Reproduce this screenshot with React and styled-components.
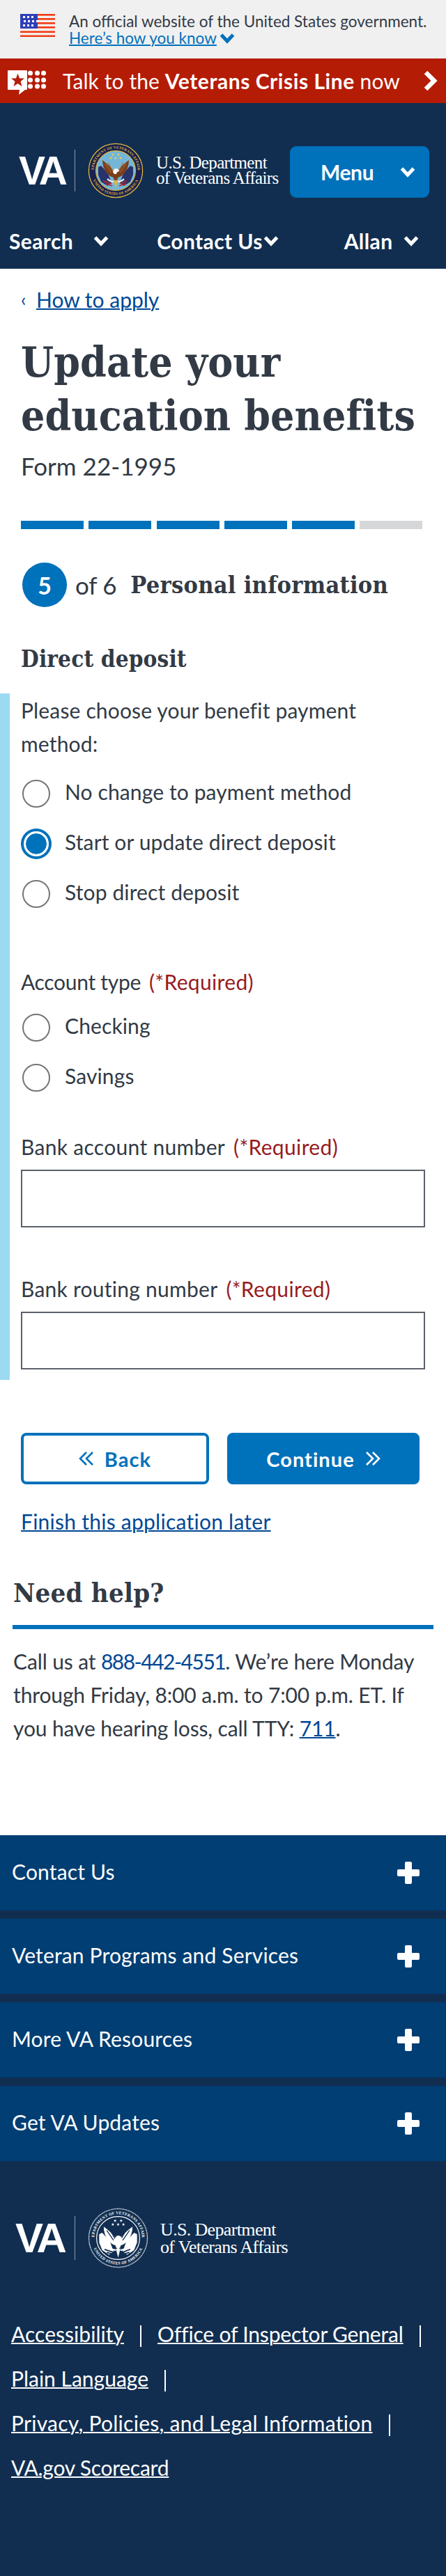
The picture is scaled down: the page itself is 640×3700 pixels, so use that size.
import React from "react";
import styled, { createGlobalStyle } from "styled-components";

const SANS = `Lato, "Noto Sans", sans-serif`;
const SLAB = `"DejaVu Serif Condensed", "DejaVu Serif", serif`;
const SEAL_SERIF = `"Liberation Serif", serif`;

const GlobalStyle = createGlobalStyle`
  html, body {
    margin: 0;
    padding: 0;
    background: #fff;
  }
  body {
    font-family: ${SANS};
    color: #323a45;
  }
  * {
    box-sizing: border-box;
  }
`;

const Page = styled.div`
  width: 640px;
  min-height: 3700px;
  display: flex;
  flex-direction: column;
`;

const Banner = styled.div`
  height: 84px;
  background: #f0f0f0;
  display: flex;
  padding: 19px 0 0 29px;
`;

const FlagSvg = styled.svg`
  flex: none;
  margin-top: 1px;
`;

const BannerText = styled.div`
  margin-left: 20px;
  font-size: 22.5px;
  line-height: 24px;
`;

const BannerLinkRow = styled.div`
  display: flex;
  align-items: center;
  gap: 4px;
`;

const BannerLink = styled.a`
  color: #0071bb;
  text-decoration: underline;
  text-decoration-thickness: 2px;
`;

const CrisisBar = styled.div`
  height: 64px;
  background: #b51c06;
  color: #fff;
  display: flex;
  align-items: center;
  padding: 0 12px 0 10px;
  font-size: 30px;
  letter-spacing: 0.1px;
`;

const CrisisSvg = styled.svg`
  flex: none;
  margin-top: 4px;
`;

const CrisisText = styled.span`
  margin-left: 22px;
  strong {
    font-weight: 700;
    letter-spacing: 0.55px;
  }
`;

const CrisisArrow = styled.span`
  margin-left: auto;
  display: flex;
`;

const Header = styled.header`
  height: 238px;
  background: #112e51;
  color: #fff;
  display: flex;
  flex-direction: column;
`;

const HeaderTop = styled.div`
  display: flex;
  align-items: center;
  justify-content: space-between;
  padding: 57px 24px 0 27px;
`;

const Logo = styled.div`
  display: flex;
  align-items: center;
`;

const VaMark = styled.span`
  font-family: "Liberation Sans", sans-serif;
  font-weight: 700;
  font-size: ${(p) => p.$size}px;
  line-height: 1;
  letter-spacing: -5px;
  width: ${(p) => p.$width}px;
  color: #fff;
`;

const LogoRule = styled.span`
  width: 1px;
  height: ${(p) => p.$height}px;
  background: #8d9aab;
  margin: 0 18px 0 15px;
`;

const SealSvg = styled.svg`
  flex: none;
`;

const DeptName = styled.span`
  font-family: ${SEAL_SERIF};
  font-size: ${(p) => p.$size}px;
  line-height: ${(p) => p.$line}px;
  margin-left: ${(p) => p.$gap}px;
  letter-spacing: -0.65px;
  white-space: nowrap;
  color: #fff;
`;

const MenuButton = styled.button`
  width: 200px;
  height: 74px;
  margin-top: 4px;
  background: #0071bb;
  border: none;
  border-radius: 9px;
  color: #fff;
  font-family: ${SANS};
  font-weight: 700;
  font-size: 30px;
  letter-spacing: -0.4px;
  display: flex;
  align-items: center;
  padding: 0 20px 0 44px;
  justify-content: space-between;
`;

const NavRow = styled.nav`
  display: grid;
  grid-template-columns: repeat(3, 1fr);
  margin-top: 37px;
`;

const NavItem = styled.div`
  display: flex;
  align-items: center;
  font-weight: 700;
  font-size: 30px;
  line-height: 48px;
  letter-spacing: 0.4px;
  padding-left: ${(p) => p.$pad}px;
  gap: ${(p) => p.$gap}px;
`;

const Main = styled.main`
  padding: 0 30px;
`;

const Breadcrumb = styled.div`
  margin-top: 20px;
  display: flex;
  align-items: center;
  gap: 14px;
  font-size: 30px;
  line-height: 48px;
`;

const Caret = styled.span`
  flex: none;
  width: 8px;
  color: #004795;
  font-size: 26px;
  line-height: 1;
`;

const TextLink = styled.a`
  color: #004795;
  text-decoration: underline;
  text-decoration-thickness: 2px;
`;

const Title = styled.h1`
  margin: 28px 0 0;
  font-family: ${SLAB};
  font-weight: 700;
  font-size: 60px;
  line-height: 77px;
  letter-spacing: 0.15px;
  color: #323a45;
`;

const FormNumber = styled.div`
  font-size: 35px;
  line-height: 48px;
  margin-top: 8.5px;
`;

const Progress = styled.div`
  display: flex;
  gap: 7.3px;
  margin-top: 55.5px;
`;

const Segment = styled.span`
  width: 90px;
  height: 12px;
  background: ${(p) => (p.$done ? "#0071bb" : "#d6d7d9")};
`;

const StepRow = styled.div`
  display: flex;
  align-items: center;
  margin: 48px 0 0 2px;
`;

const StepCircle = styled.span`
  width: 64px;
  height: 64px;
  border-radius: 50%;
  background: #0071bb;
  color: #fff;
  font-weight: 700;
  font-size: 34px;
  display: flex;
  align-items: center;
  justify-content: center;
`;

const StepOf = styled.span`
  font-size: 35px;
  letter-spacing: -0.25px;
  margin-left: 12px;
`;

const StepTitle = styled.h2`
  margin: 0 0 0 20px;
  font-family: ${SLAB};
  font-weight: 700;
  font-size: 34px;
  letter-spacing: 0.3px;
`;

const SectionTitle = styled.h3`
  margin: 51px 0 0;
  font-family: ${SLAB};
  font-weight: 700;
  font-size: 33px;
  line-height: 48px;
  letter-spacing: 0.15px;
`;

const Form = styled.div`
  margin: 25px 0 0 -30px;
  width: 640px;
  border-left: 14px solid #9bdaf1;
  padding-left: 16px;
  height: 986px;
`;

const Question = styled.div`
  font-size: 30px;
  line-height: 48px;
  width: 540px;
  letter-spacing: ${(p) => p.$spacing}px;
  margin-top: ${(p) => p.$top || 0}px;
`;

const Required = styled.span`
  color: #981b1e;
  margin-left: 12px;
  letter-spacing: 0.35px;
`;

const Options = styled.div`
  display: flex;
  flex-direction: column;
  gap: 32px;
  margin-top: ${(p) => p.$top}px;
`;

const Option = styled.label`
  display: flex;
  align-items: center;
  height: 40px;
  font-size: 30px;
  letter-spacing: 0.12px;
  gap: 21px;
  padding-left: 2px;
`;

const OptionLabel = styled.span`
  padding-bottom: 7px;
`;

const RadioInput = styled.input`
  appearance: none;
  margin: 0;
  flex: none;
  width: 40px;
  height: 40px;
  border-radius: 50%;
  border: 2px solid #757575;
  background: #fff;

  &:checked {
    background: #0071bb;
    background-clip: padding-box;
    border: 3px solid #fff;
    box-shadow: 0 0 0 4px #0071bb;
    width: 36px;
    height: 36px;
    margin: 0 2px;
  }
`;

const TextField = styled.input`
  display: block;
  width: 580px;
  height: 83px;
  margin-top: 9px;
  border: 2px solid #5b616b;
  background: #fff;
  border-radius: 0;
`;

const Actions = styled.div`
  display: flex;
  margin-top: 76px;
  gap: 26px;
`;

const NavButton = styled.button`
  height: 74px;
  width: ${(p) => p.$width}px;
  border-radius: 8px;
  border: 4px solid #0071bb;
  background: ${(p) => (p.$primary ? "#0071bb" : "#fff")};
  color: ${(p) => (p.$primary ? "#fff" : "#0071bb")};
  font-family: ${SANS};
  font-weight: 700;
  font-size: 29px;
  letter-spacing: 1.05px;
  display: flex;
  align-items: center;
  justify-content: center;
  gap: 15px;
`;

const SaveLater = styled.div`
  font-size: 30px;
  line-height: 48px;
  letter-spacing: 0.25px;
  margin-top: 29px;
`;

const Help = styled.section`
  padding: 0 18px;
  margin-top: 51px;
`;

const HelpTitle = styled.h2`
  margin: 0;
  padding: 0 0 18px 1px;
  font-family: ${SLAB};
  font-weight: 700;
  font-size: 38px;
  line-height: 56px;
  letter-spacing: 0.25px;
  border-bottom: 6px solid #0071bb;
`;

const HelpBody = styled.p`
  margin: 22px 0 0;
  padding-left: 1px;
  font-size: 30px;
  line-height: 48px;
  letter-spacing: -0.13px;
`;

const PhoneLink = styled.a`
  color: #004795;
  letter-spacing: -1.5px;
`;

const Accordion = styled.div`
  margin-top: 130px;
  background: #112e51;
  display: flex;
  flex-direction: column;
  gap: 12px;
`;

const AccordionRow = styled.div`
  height: 108px;
  background: #003e73;
  color: #fff;
  font-size: 30px;
  letter-spacing: 0.16px;
  display: flex;
  align-items: center;
  justify-content: space-between;
  padding: 0 38px 0 17px;
`;

const AccordionLabel = styled.span`
  padding-bottom: 5px;
`;

const Footer = styled.footer`
  flex: 1;
  background: #112e51;
  color: #fff;
  padding: 67px 0 0 22px;
`;

const FooterLinks = styled.ul`
  list-style: none;
  margin: 62px 0 0 -6px;
  padding: 0;
  display: flex;
  flex-wrap: wrap;
  width: 620px;
`;

const FooterItem = styled.li`
  display: flex;
  align-items: center;
  height: 64px;
  font-size: 30px;
`;

const FooterLink = styled.a`
  color: #fff;
  text-decoration: underline;
  text-decoration-thickness: 2px;
  letter-spacing: ${(p) => p.$spacing}px;
`;

const FooterSep = styled.span`
  width: 2px;
  height: 31px;
  margin: 6px 23px 0;
  background: #fff;
`;

const ChevronSvg = styled.svg`
  flex: none;
`;

const DoubleSvg = styled.svg`
  flex: none;
  transform: ${(p) => (p.$flip ? "scaleX(-1)" : "none")};
`;

const Chevron = ({ color = "#fff" }) => (
  <ChevronSvg width="22" height="22" viewBox="0 0 22 22">
    <polyline points="2.5,6 11,15 19.5,6" fill="none" stroke={color} strokeWidth="5" />
  </ChevronSvg>
);

const DoubleChevron = ({ color, flip }) => (
  <DoubleSvg width="22" height="22" viewBox="0 0 22 22" $flip={flip}>
    <g fill="none" stroke={color} strokeWidth="2.6">
      <polyline points="2,2 11,11 2,20" />
      <polyline points="11,2 20,11 11,20" />
    </g>
  </DoubleSvg>
);

const Plus = () => (
  <svg width="32" height="32" viewBox="0 0 32 32">
    <path
      d="M13 0h6a2 2 0 0 1 2 2v9h9a2 2 0 0 1 2 2v6a2 2 0 0 1-2 2h-9v9a2 2 0 0 1-2 2h-6a2 2 0 0 1-2-2v-9H2a2 2 0 0 1-2-2v-6a2 2 0 0 1 2-2h9V2a2 2 0 0 1 2-2z"
      fill="#fff"
    />
  </svg>
);

const Flag = () => {
  const stars = [];
  [3, 9, 15].forEach((y, row) => {
    for (let i = 0; i < (row === 1 ? 4 : 3); i++) {
      stars.push(<rect key={`${row}-${i}`} x={(row === 1 ? 5 : 4) + i * 6} y={y} width="3" height="3" fill="#fff" />);
    }
  });
  return (
    <FlagSvg width="50" height="33" viewBox="0 0 50 33">
      <rect width="50" height="33" fill="#f5f0ef" />
      {[0, 6, 12, 18, 24.5, 30.5].map((y) => (
        <rect key={y} y={y} width="50" height="2.6" fill="#ee3a14" />
      ))}
      <rect width="25" height="21" fill="#2f3fb9" />
      {stars}
    </FlagSvg>
  );
};

const CrisisIcon = () => (
  <CrisisSvg width="58" height="36" viewBox="0 0 58 36">
    <path d="M2 1h26a1 1 0 0 1 1 1v26a1 1 0 0 1-1 1h-2l-9 7 1-7H2a1 1 0 0 1-1-1V2a1 1 0 0 1 1-1z" fill="#fff" />
    <polygon
      points="15.5,5.5 18,12.5 25,12.5 19.5,17 21.5,24 15.5,20 9.5,24 11.5,17 6,12.5 13,12.5"
      fill="#b51c06"
    />
    {[33.5, 43.5, 52.5].map((x) =>
      [5, 15, 24].map((y) => <circle key={`${x}-${y}`} cx={x} cy={y} r="3.5" fill="#fff" />)
    )}
  </CrisisSvg>
);

// eagle seal, in colour for the header and white for the footer
const Seal = ({ size, mono, id }) => {
  const ring = mono ? "#fff" : "#e0b83c";
  const band = mono ? "#112e51" : "#18214f";
  const field = mono ? "#112e51" : "#74b6d8";
  const wing = mono ? "#fff" : "#7a3f1c";
  const wingLight = mono ? "#112e51" : "#a9652f";
  const left = mono ? "#fff" : "#27336b";
  const stripe = mono ? "#112e51" : "#c0282d";
  return (
    <SealSvg width={size} height={size} viewBox="0 0 80 80">
      <defs>
        <path id={`${id}-top`} d="M8.5 40a31.5 31.5 0 0 1 63 0" />
        <path id={`${id}-bottom`} d="M5 40a35 35 0 0 0 70 0" />
      </defs>
      <circle cx="40" cy="40" r="39.5" fill={band} />
      <circle cx="40" cy="40" r="38.6" fill="none" stroke={ring} strokeWidth="1.3" strokeDasharray={mono ? "1 .7" : undefined} />
      <circle cx="40" cy="40" r="28.4" fill={field} stroke={ring} strokeWidth="1.1" />
      <text fontFamily="Liberation Serif, serif" fontSize="5.2" fontWeight="700" fill={ring} letterSpacing=".25">
        <textPath href={`#${id}-top`} startOffset="50%" textAnchor="middle">
          DEPARTMENT OF VETERANS AFFAIRS
        </textPath>
      </text>
      <text fontFamily="Liberation Serif, serif" fontSize="5.2" fontWeight="700" fill={ring} letterSpacing=".25">
        <textPath href={`#${id}-bottom`} startOffset="50%" textAnchor="middle">
          UNITED STATES OF AMERICA
        </textPath>
      </text>
      {[[36, 17], [44, 17], [40, 22], [33, 22], [47, 22]].map(([x, y]) => (
        <polygon
          key={`${x}-${y}`}
          points={`${x},${y - 2} ${x + 0.7},${y - 0.5} ${x + 2},${y - 0.5} ${x + 0.9},${y + 0.5} ${x + 1.3},${y + 2} ${x},${y + 1} ${x - 1.3},${y + 2} ${x - 0.9},${y + 0.5} ${x - 2},${y - 0.5} ${x - 0.7},${y - 0.5}`}
          fill={mono ? "#fff" : "#f0d04a"}
        />
      ))}
      <polygon points="15,35 19,33 29,44 34,58 28,62 19,56 15,46" fill={left} />
      <polygon points="65,35 61,33 51,44 46,58 52,62 61,56 65,46" fill={left} />
      <g stroke={stripe} strokeWidth="1.6" fill="none">
        <path d="M22 55l12 4M25 59l10 3M46 59l10-4M45 62l10-3" />
      </g>
      <path d="M38 42C34 36 28 30 21 25c0 7 2 13 6 18 3 4 6 6 10 7z" fill={wing} />
      <path d="M42 42c4-6 10-12 17-17 0 7-2 13-6 18-3 4-6 6-10 7z" fill={wing} />
      <path d="M25 30l9 13M29 29l7 12M55 30l-9 13M51 29l-7 12" stroke={wingLight} strokeWidth="1.2" />
      <path d="M36 42c0-3 2-5 4-5s4 2 4 5l-1 10-3 3-3-3z" fill={wing} />
      <path d="M36 42c0-3 2-5 4-5 3 0 5 2 5 4l-3 1-1 3h-3z" fill="#fff" />
      <path d="M37 54l3 12 3-12z" fill={mono ? "#fff" : "#e5b53c"} />
      <path d="M28 52c3 3 6 4 9 4M52 52c-3 3-6 4-9 4" stroke={mono ? "#fff" : "#f2f2f2"} strokeWidth="2" fill="none" />
    </SealSvg>
  );
};

const footerLinks = [
  { label: "Accessibility", spacing: 0.04 },
  { label: "Office of Inspector General", spacing: -0.18 },
  { label: "Plain Language", spacing: 0 },
  { label: "Privacy, Policies, and Legal Information", spacing: 0.27 },
  { label: "VA.gov Scorecard", spacing: -0.25, last: true },
];

const App = () => {
  return (
    <Page>
      <GlobalStyle />
      <Banner>
        <Flag />
        <BannerText>
          <div>An official website of the United States government.</div>
          <BannerLinkRow>
            <BannerLink>Here’s how you know</BannerLink>
            <Chevron color="#0071bb" />
          </BannerLinkRow>
        </BannerText>
      </Banner>

      <CrisisBar>
        <CrisisIcon />
        <CrisisText>
          Talk to the <strong>Veterans Crisis Line</strong> now
        </CrisisText>
        <CrisisArrow>
          <svg width="20" height="30" viewBox="0 0 20 30">
            <polyline points="3,3 15,15 3,27" fill="none" stroke="#fff" strokeWidth="6.5" />
          </svg>
        </CrisisArrow>
      </CrisisBar>

      <Header>
        <HeaderTop>
          <Logo>
            <VaMark $size={57} $width={65}>VA</VaMark>
            <LogoRule $height={60} />
            <Seal size={80} id="head" />
            <DeptName $size={25} $line={22} $gap={18}>
              U.S. Department
              <br />
              of Veterans Affairs
            </DeptName>
          </Logo>
          <MenuButton>
            Menu
            <Chevron />
          </MenuButton>
        </HeaderTop>
        <NavRow>
          <NavItem $pad={13} $gap={29}>Search<Chevron /></NavItem>
          <NavItem $pad={12} $gap={1}>Contact Us<Chevron /></NavItem>
          <NavItem $pad={67} $gap={15}>Allan<Chevron /></NavItem>
        </NavRow>
      </Header>

      <Main>
        <Breadcrumb>
          <Caret>‹</Caret>
          <TextLink>How to apply</TextLink>
        </Breadcrumb>
        <Title>
          Update your
          <br />
          education benefits
        </Title>
        <FormNumber>Form 22-1995</FormNumber>
        <Progress>
          {[1, 2, 3, 4, 5, 6].map((n) => (
            <Segment key={n} $done={n <= 5} />
          ))}
        </Progress>
        <StepRow>
          <StepCircle>5</StepCircle>
          <StepOf>of 6</StepOf>
          <StepTitle>Personal information</StepTitle>
        </StepRow>
        <SectionTitle>Direct deposit</SectionTitle>
        <Form>
          <Question $spacing={0.16}>Please choose your benefit payment method:</Question>
          <Options $top={28}>
            <Option><RadioInput type="radio" name="payment" readOnly /><OptionLabel>No change to payment method</OptionLabel></Option>
            <Option><RadioInput type="radio" name="payment" readOnly checked /><OptionLabel>Start or update direct deposit</OptionLabel></Option>
            <Option><RadioInput type="radio" name="payment" readOnly /><OptionLabel>Stop direct deposit</OptionLabel></Option>
          </Options>
          <Question $top={82} $spacing={-0.3}>Account type<Required>(*Required)</Required></Question>
          <Options $top={22}>
            <Option><RadioInput type="radio" name="account" readOnly /><OptionLabel>Checking</OptionLabel></Option>
            <Option><RadioInput type="radio" name="account" readOnly /><OptionLabel>Savings</OptionLabel></Option>
          </Options>
          <Question $top={55} $spacing={0.31}>Bank account number<Required>(*Required)</Required></Question>
          <TextField />
          <Question $top={64} $spacing={0.26}>Bank routing number<Required>(*Required)</Required></Question>
          <TextField />
        </Form>
        <Actions>
          <NavButton $width={270}>
            <DoubleChevron color="#0071bb" flip />
            Back
          </NavButton>
          <NavButton $width={276} $primary>
            Continue
            <DoubleChevron color="#fff" />
          </NavButton>
        </Actions>
        <SaveLater>
          <TextLink>Finish this application later</TextLink>
        </SaveLater>
      </Main>

      <Help>
        <HelpTitle>Need help?</HelpTitle>
        <HelpBody>
          Call us at <PhoneLink>888-442-4551</PhoneLink>. We’re here Monday through Friday, 8:00 a.m. to 7:00 p.m. ET. If
          you have hearing loss, call TTY: <TextLink>711</TextLink>.
        </HelpBody>
      </Help>

      <Accordion>
        {["Contact Us", "Veteran Programs and Services", "More VA Resources", "Get VA Updates"].map((label) => (
          <AccordionRow key={label}>
            <AccordionLabel>{label}</AccordionLabel>
            <Plus />
          </AccordionRow>
        ))}
      </Accordion>

      <Footer>
        <Logo>
          <VaMark $size={60} $width={70}>VA</VaMark>
          <LogoRule $height={63} />
          <Seal size={87} mono id="foot" />
          <DeptName $size={26} $line={25} $gap={17}>
            U.S. Department
            <br />
            of Veterans Affairs
          </DeptName>
        </Logo>
        <FooterLinks>
          {footerLinks.map((link) => (
            <FooterItem key={link.label}>
              <FooterLink $spacing={link.spacing}>{link.label}</FooterLink>
              {!link.last && <FooterSep />}
            </FooterItem>
          ))}
        </FooterLinks>
      </Footer>
    </Page>
  );
};

export default App;
